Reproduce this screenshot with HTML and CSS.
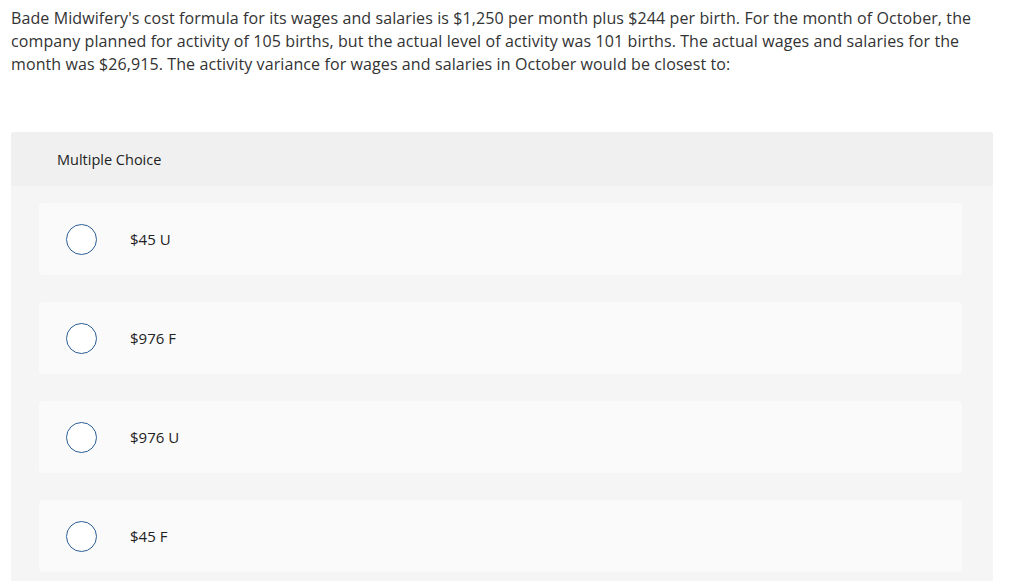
FILE: index.html
```html
<!DOCTYPE html>
<html>
<head>
<meta charset="utf-8">
<link rel="stylesheet" href="styles.css">
</head>
<body>
<div class="question">Bade Midwifery's cost formula for its wages and salaries is $1,250 per month plus $244 per birth. For the month of October, the company planned for activity of 105 births, but the actual level of activity was 101 births. The actual wages and salaries for the month was $26,915. The activity variance for wages and salaries in October would be closest to:</div>
<div class="panel">
  <div class="panel-head">Multiple Choice</div>
  <div class="panel-body">
    <div class="option"><span class="radio"></span><span class="label">$45 U</span></div>
    <div class="option"><span class="radio"></span><span class="label">$976 F</span></div>
    <div class="option"><span class="radio"></span><span class="label">$976 U</span></div>
    <div class="option"><span class="radio"></span><span class="label">$45 F</span></div>
  </div>
</div>
</body>
</html>
```
FILE: styles.css
```css
html, body { margin: 0; padding: 0; background: #fff; }
body { font-family: "Open Sans", "Liberation Sans", sans-serif; color: #333; }
.question {
  padding: 7px 11px 0 11px;
  width: 970px;
  font-size: 16px;
  letter-spacing: 0.1px;
  line-height: 23px;
  color: #333;
}
.panel {
  margin: 56px 0 0 11px;
  width: 982px;
  background: #f5f5f5;
  border-radius: 3px 3px 0 0;
  overflow: hidden;
}
.panel-head {
  background: #f0f0f0;
  height: 54px;
  display: flex;
  align-items: center;
  padding-left: 46px;
  font-size: 14.5px;
  color: #222;
}
.panel-body {
  padding: 17px 31px 20px 28px;
  display: flex;
  flex-direction: column;
  gap: 27px;
}
.option {
  height: 72px;
  background: #fafafa;
  border-radius: 4px;
  display: flex;
  align-items: center;
  padding-left: 27px;
}
.radio {
  width: 29px;
  height: 29px;
  border: 1px solid #2b5e96;
  border-radius: 50%;
  background: #fff;
  flex: none;
}
.label {
  margin-left: 33px;
  font-size: 15px;
  color: #222;
}
```
